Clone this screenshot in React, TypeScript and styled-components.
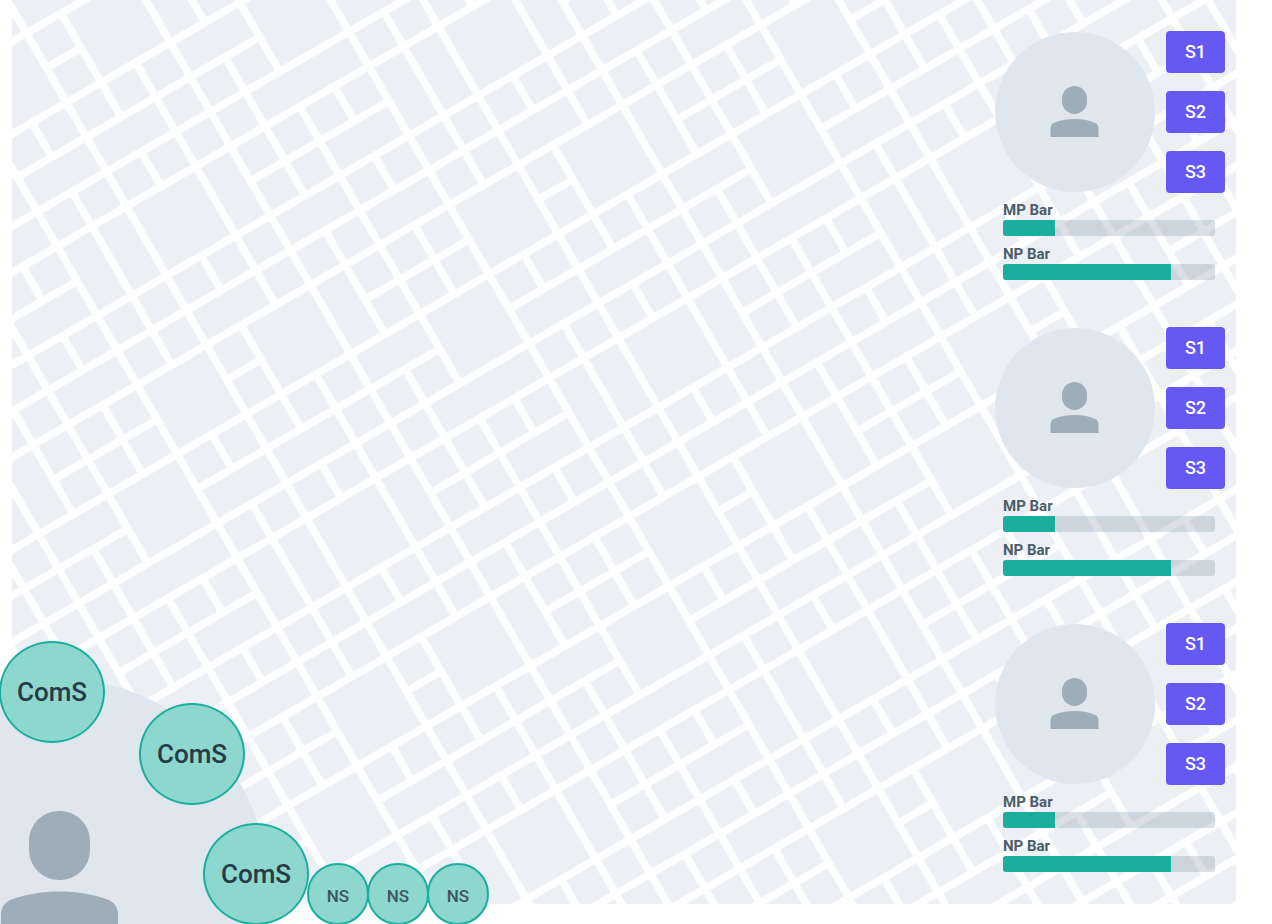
import React from "react";
import styled, { createGlobalStyle } from "styled-components";

const GlobalStyle = createGlobalStyle`
  *, *::before, *::after { box-sizing: border-box; }
  html, body, #root { height: 100%; }
  body {
    margin: 0;
    background: #ffffff;
    font-family: Roboto, "Liberation Sans", sans-serif;
  }
`;

const Screen = styled.div`
  position: relative;
  display: flex;
  min-height: 100%;
  padding: 0 36px 20px 12px;
  overflow: hidden;
`;

const Stage = styled.main`
  position: relative;
  flex: 1;
  display: flex;
  justify-content: flex-end;
`;

const MapLayer = styled.svg`
  position: absolute;
  inset: 0;
  width: 100%;
  height: 100%;
`;

const Party = styled.section`
  position: relative;
  display: flex;
  flex-direction: column;
  gap: 47px;
  width: 241px;
  padding: 31px 11px 32px 0;
`;

const Member = styled.article`
  display: flex;
  flex-direction: column;
  gap: 7px;
`;

const MemberTop = styled.div`
  display: flex;
  justify-content: space-between;
  height: 162px;
`;

const Avatar = styled.div`
  display: flex;
  align-items: center;
  justify-content: center;
  width: 160px;
  height: 160px;
  margin-top: 1px;
  border-radius: 50%;
  background: #dfe6ee;
`;

const Skills = styled.div`
  display: flex;
  flex-direction: column;
  gap: 18px;
`;

const SkillButton = styled.button`
  width: 59px;
  height: 42px;
  padding: 0;
  border: 0;
  border-radius: 4px;
  background: #6559f5;
  color: #ffffff;
  font: 500 18px/42px Roboto, "Liberation Sans", sans-serif;
  text-align: center;
`;

const Stats = styled.div`
  display: flex;
  flex-direction: column;
  gap: 8px;
  padding: 0 10px 0 8px;
`;

const Stat = styled.div`
  color: #4b5c6b;
  font-size: 15px;
  font-weight: 700;
  line-height: 20px;
`;

const Track = styled.div`
  height: 16px;
  border-radius: 3px;
  background: rgba(120, 140, 154, 0.27);
  overflow: hidden;
`;

const Fill = styled.div`
  height: 100%;
  background: #1aae9f;
`;

const Hero = styled.section`
  position: absolute;
  left: 0;
  bottom: 0;
  width: 490px;
  height: 284px;
  overflow: hidden;
`;

const HeroDisc = styled.div`
  position: absolute;
  left: -148px;
  top: 39px;
  width: 416px;
  height: 416px;
  border-radius: 50%;
  background: #dfe6ee;
`;

const HeroIcon = styled.svg`
  position: absolute;
  left: 0;
  top: 170px;
  width: 120px;
  height: 124px;
`;

const RoundSkill = styled.button<{ $x: number; $y: number; $small?: boolean }>`
  position: absolute;
  left: ${(p) => p.$x}px;
  top: ${(p) => p.$y}px;
  width: ${(p) => (p.$small ? 62 : 106)}px;
  height: ${(p) => (p.$small ? 62 : 102)}px;
  padding: ${(p) => (p.$small ? "4px 0 0" : "0")};
  border: 2px solid #1aae9f;
  border-radius: 50%;
  background: #8dd7cf;
  color: ${(p) => (p.$small ? "#3d5560" : "#273b47")};
  font: 500 ${(p) => (p.$small ? 17 : 26)}px/30px Roboto, "Liberation Sans", sans-serif;
  text-align: center;
`;

const CELL = 40;
const STREET = 7.5;
const SPAN = 9;

type Block = [col: number, row: number, cols?: number, rows?: number];

const blocks: Block[] = [
  [0, 0, 2, 2], [2, 0, 1, 2], [3, 0], [4, 0], [5, 0], [6, 0], [7, 0, 1, 2], [8, 0, 1, 2],
  [3, 1], [4, 1], [5, 1, 2, 1],
  [0, 2], [1, 2], [2, 2], [3, 2, 2, 1], [5, 2], [6, 2], [7, 2], [8, 2],
  [0, 3, 2, 1], [2, 3], [3, 3], [4, 3], [5, 3, 2, 1], [7, 3], [8, 3],
  [0, 4], [1, 4, 2, 2], [3, 4, 1, 2], [4, 4], [5, 4], [6, 4], [7, 4, 2, 2],
  [0, 5], [4, 5], [5, 5], [6, 5],
  [0, 6], [1, 6], [2, 6], [3, 6, 2, 1], [5, 6, 2, 2], [7, 6], [8, 6],
  [0, 7, 2, 1], [2, 7], [3, 7], [4, 7], [7, 7, 2, 1],
  [0, 8], [1, 8], [2, 8], [3, 8], [4, 8, 3, 1], [7, 8], [8, 8],
];

function CityMap() {
  return (
    <MapLayer aria-hidden="true">
      <defs>
        <pattern
          id="city"
          width={CELL * SPAN}
          height={CELL * SPAN}
          patternUnits="userSpaceOnUse"
          patternTransform="translate(114.5 206.4) rotate(-30)"
        >
          {blocks.map(([col, row, cols = 1, rows = 1]) => (
            <rect
              key={`${col}-${row}`}
              x={col * CELL + STREET / 2}
              y={row * CELL + STREET / 2}
              width={cols * CELL - STREET}
              height={rows * CELL - STREET}
              fill="#ecf0f5"
            />
          ))}
        </pattern>
      </defs>
      <rect width="100%" height="100%" fill="#ffffff" />
      <rect width="100%" height="100%" fill="url(#city)" />
    </MapLayer>
  );
}

const stats = [
  { label: "MP Bar", value: 52 },
  { label: "NP Bar", value: 168 },
];

function PartyMember() {
  return (
    <Member>
      <MemberTop>
        <Avatar>
          <svg width="50" height="52" viewBox="0 0 50 52" aria-hidden="true">
            <g fill="#9eadba">
              <rect x="12" y="0" width="25" height="28" rx="12.5" />
              <path d="M0.500 51V42.500C0.500 39.500 2 37.500 5.500 36.200C11 34.200 18 33 24.500 33S38 34.200 43.500 36.200C47 37.500 48.500 39.500 48.500 42.500V51Z" />
            </g>
          </svg>
        </Avatar>
        <Skills>
          {["S1", "S2", "S3"].map((name) => (
            <SkillButton key={name} type="button">{name}</SkillButton>
          ))}
        </Skills>
      </MemberTop>
      <Stats>
        {stats.map(({ label, value }) => (
          <Stat key={label}>
            {label}
            <Track role="meter" aria-label={label} aria-valuemin={0} aria-valuemax={212} aria-valuenow={value}>
              <Fill style={{ width: `${(value / 212) * 100}%` }} />
            </Track>
          </Stat>
        ))}
      </Stats>
    </Member>
  );
}

export default function App() {
  return (
    <>
      <GlobalStyle />
      <Screen>
        <Stage>
          <CityMap />
          <Party>
            <PartyMember />
            <PartyMember />
            <PartyMember />
          </Party>
        </Stage>
        <Hero>
          <HeroDisc />
          <HeroIcon viewBox="0 0 120 124" aria-hidden="true">
            <g fill="#9eadba">
              <rect x="29" y="1" width="61" height="69" rx="30" />
              <path d="M1 124V105C1 97 5 91.500 13 89C27 84 43 81.500 59.500 81.500S92 84 106 89C114 91.500 118 97 118 105V124Z" />
            </g>
          </HeroIcon>
          <RoundSkill type="button" $x={-1} $y={1}>ComS</RoundSkill>
          <RoundSkill type="button" $x={139} $y={63}>ComS</RoundSkill>
          <RoundSkill type="button" $x={203} $y={183}>ComS</RoundSkill>
          <RoundSkill type="button" $x={307} $y={223} $small>NS</RoundSkill>
          <RoundSkill type="button" $x={367} $y={223} $small>NS</RoundSkill>
          <RoundSkill type="button" $x={427} $y={223} $small>NS</RoundSkill>
        </Hero>
      </Screen>
    </>
  );
}
